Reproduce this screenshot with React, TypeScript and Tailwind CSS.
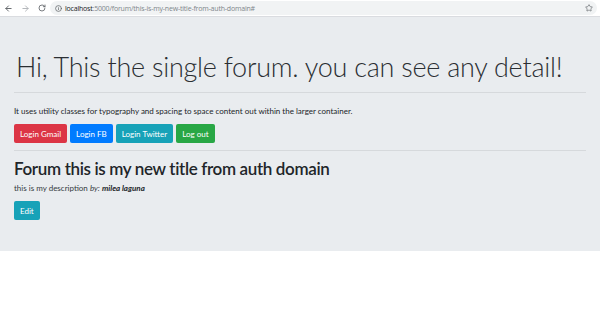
import { ArrowLeft, ArrowRight, RotateCw, Info, Star } from 'lucide-react';

const BUTTONS = [
  { label: 'Login Gmail', cls: 'bg-[#dc3545]' },
  { label: 'Login FB', cls: 'bg-[#007bff]' },
  { label: 'Login Twitter', cls: 'bg-[#17a2b8]' },
  { label: 'Log out', cls: 'bg-[#28a745]' },
];

export default function App() {
  return (
    <div className="w-[600px] h-[312px] bg-white font-['Lato',sans-serif] text-[#212529] overflow-hidden">
      {/* browser toolbar */}
      <div className="h-[17px] flex items-center border-b border-[#dadce0] bg-white font-['Open_Sans',sans-serif]">
        <div className="flex items-center gap-[8px] pl-[4px] w-[50px] text-[#5f6368]">
          <ArrowLeft className="w-[9px] h-[9px]" strokeWidth={2.5} />
          <ArrowRight className="w-[9px] h-[9px] text-[#b0b3b7]" strokeWidth={2.5} />
          <RotateCw className="w-[8px] h-[8px]" strokeWidth={2.5} />
        </div>
        <div className="flex-1 mr-[3px] h-[14px] rounded-full bg-[#f1f3f4] flex items-center pl-[5px] pr-[4px] gap-[3px]">
          <Info className="w-[7px] h-[7px] text-[#5f6368]" strokeWidth={2.5} />
          <span className="text-[7px] leading-none tracking-[-0.2px] flex-1">
            <span className="text-[#202124]">localhost</span>
            <span className="text-[#80868b]">:5000/forum/this-is-my-new-title-from-auth-domain#</span>
          </span>
          <Star className="w-[8px] h-[8px] text-[#5f6368]" strokeWidth={2} />
        </div>
      </div>

      {/* jumbotron */}
      <div className="bg-[#e9ecef] h-[234px] px-[14px] pt-[34px]">
        <h1 className="text-[27px] leading-[32px] font-light tracking-[-0.25px] pl-[2px] text-[#2b2f33] whitespace-nowrap">
          Hi, This the single forum. you can see any detail!
        </h1>
        <hr className="mt-[9px] border-t border-[#d6d9dc]" />
        <p className="mt-[12px] text-[8px] leading-[12px]">
          It uses utility classes for typography and spacing to space content out within the larger container.
        </p>
        <div className="mt-[7px] flex gap-[3px]">
          {BUTTONS.map(({ label, cls }) => (
            <button
              key={label}
              className={`${cls} text-white text-[8px] h-[19px] px-[6px] rounded-[2px] leading-none`}
            >
              {label}
            </button>
          ))}
        </div>
        <hr className="mt-[7px] border-t border-[#d6d9dc]" />
        <h3 className="mt-[8px] text-[17px] leading-[20px] tracking-[-0.35px] font-semibold">
          Forum this is my new title from auth domain
        </h3>
        <p className="mt-[3px] text-[8px] leading-[12px] text-[#343a40]">
          this is my description <em>by:</em> <em className="font-bold text-[#212529]">milea laguna</em>
        </p>
        <button className="mt-[7px] bg-[#17a2b8] text-white text-[8px] h-[19px] px-[6px] rounded-[2px] leading-none">
          Edit
        </button>
      </div>
    </div>
  );
}
